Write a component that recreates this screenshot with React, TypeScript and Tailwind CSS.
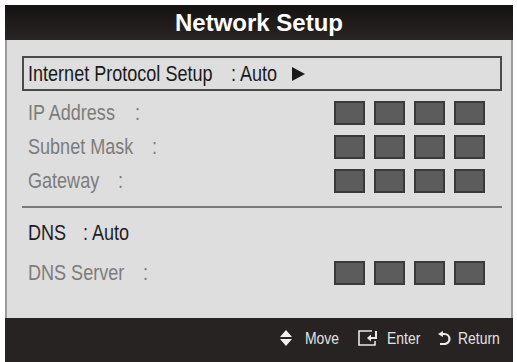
const sans = { fontFamily: '"Liberation Sans", Arial, sans-serif' };

// condensed text: Liberation Sans squeezed to the narrow face of the TV menu
function N({ children, w }: { children: React.ReactNode; w: string }) {
  return (
    <span className={`block shrink-0 ${w}`}>
      <span className="inline-block origin-left scale-x-[0.82] whitespace-nowrap">{children}</span>
    </span>
  );
}

function Boxes() {
  return (
    <div className="flex gap-[9px]">
      {[0, 1, 2, 3].map((i) => (
        <div key={i} className="h-[24px] w-[31px] border-2 border-[#3a3a3a] bg-[#5c5c5c]" />
      ))}
    </div>
  );
}

function Row({ label, w }: { label: string; w: string }) {
  return (
    <div className="flex h-[24px] items-center justify-between pl-[6px] pr-[17px]">
      <div className="flex items-center text-[22px] leading-none text-[#7c7c7c]">
        <N w={w}>{label}</N>
        <N w="w-[10px]">:</N>
      </div>
      <Boxes />
    </div>
  );
}

export default function App() {
  return (
    <div className="h-[362px] w-[517px] overflow-hidden bg-white pl-[5px] pt-[5px]" style={sans}>
      <div className="flex h-[357px] w-[508px] flex-col">
        <div className="flex h-[35px] items-center justify-center bg-gradient-to-b from-[#151212] to-[#2a2525]">
          <span className="text-[24px] font-bold leading-none text-white">Network Setup</span>
        </div>

        <div className="flex h-[278px] flex-col border-x-2 border-[#9c9c9c] bg-[#dedede] pl-[15px] pr-[9px] pt-[16px]">
          <div className="flex h-[35px] items-center border-2 border-[#4a4a4a] pl-[4px] text-[22px] leading-none text-[#1a1a1a]">
            <N w="w-[203px]">Internet Protocol Setup</N>
            <N w="w-[61px]">: Auto</N>
            <svg width="13" height="14" viewBox="0 0 13 14">
              <path d="M0 0 L13 7 L0 14 Z" fill="#1a1a1a" />
            </svg>
          </div>

          <div className="mt-[10px] flex flex-col gap-[10px]">
            <Row label="IP Address" w="w-[107px]" />
            <Row label="Subnet Mask" w="w-[124px]" />
            <Row label="Gateway" w="w-[90px]" />
          </div>

          <div className="mt-[13px] h-[2px] bg-[#7a7a7a]" />

          <div className="mt-[13px] flex h-[24px] items-center pl-[6px] text-[22px] leading-none text-[#1e1e1e]">
            <N w="w-[55px]">DNS</N>
            <N w="w-[60px]">: Auto</N>
          </div>

          <div className="mt-[16px]">
            <Row label="DNS Server" w="w-[115px]" />
          </div>
        </div>

        <div className="flex h-[44px] items-center justify-end bg-[#272323] pb-[4px] pr-[13px] text-[17px] leading-none text-[#e2e2e2]">
          <svg width="12" height="16" viewBox="0 0 12 16">
            <path d="M6 0 L12 7 L0 7 Z" fill="#f2f2f2" />
            <path d="M0 9 L12 9 L6 16 Z" fill="#f2f2f2" />
          </svg>
          <span className="ml-[13px]">
            <N w="w-[33px]">Move</N>
          </span>
          <svg className="ml-[20px]" width="21" height="16" viewBox="0 0 21 16">
            <path d="M14 1 H1 V15 H17 V11" fill="none" stroke="#e8e8e8" strokeWidth="1.6" />
            <path d="M18 1 V8 H12" fill="none" stroke="#e8e8e8" strokeWidth="2" />
            <path d="M9 8 L13 4.5 L13 11.5 Z" fill="#e8e8e8" />
          </svg>
          <span className="ml-[8px]">
            <N w="w-[33px]">Enter</N>
          </span>
          <svg className="ml-[18px]" width="13" height="14" viewBox="0 0 13 14">
            <path d="M4 3 H6.5 A5 5 0 0 1 6.5 13 H2" fill="none" stroke="#ececec" strokeWidth="2.2" />
            <path d="M0 3 L5 0 L5 6 Z" fill="#ececec" />
          </svg>
          <span className="ml-[7px]">
            <N w="w-[42px]">Return</N>
          </span>
        </div>
      </div>
    </div>
  );
}
